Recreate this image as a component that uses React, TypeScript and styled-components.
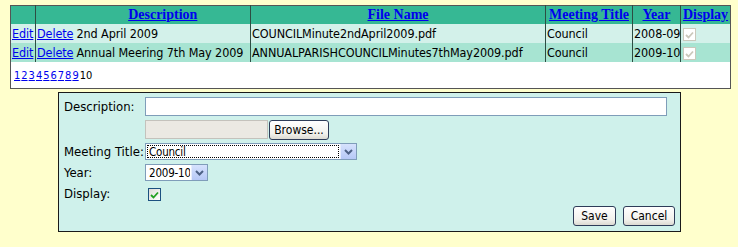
import styled, { createGlobalStyle } from "styled-components";

const GlobalStyle = createGlobalStyle`
  html, body {
    margin: 0;
    padding: 0;
    background: #ffffcc;
  }
  body {
    font-family: "DejaVu Sans Condensed", "DejaVu Sans", "Liberation Sans", Arial, sans-serif;
    font-stretch: condensed;
    font-size: 12.5px;
    color: #000;
  }
`;

const Page = styled.div`
  padding: 5px 7px 0 10px;
`;

const Grid = styled.table`
  width: 721px;
  border-collapse: collapse;
  table-layout: fixed;
  border: 1px solid #555;
`;

const Col = styled.col<{ $w: number }>`
  width: ${p => p.$w}px;
`;

const HeadRow = styled.tr`
  background: #36b894;
`;

const HeadCell = styled.th<{ $line?: boolean }>`
  height: 18px;
  padding: 0 1px;
  font: bold 14px "Liberation Serif", "Times New Roman", serif;
  font-stretch: normal;
  text-align: center;
  white-space: nowrap;
  overflow: hidden;
  border-left: ${p => (p.$line ? "1px solid #2d4d43" : "none")};
  a {
    color: #0000ee;
  }
`;

const Row = styled.tr<{ $alt?: boolean }>`
  background: ${p => (p.$alt ? "#a7e4d2" : "#d3f1ea")};
`;

const Cell = styled.td<{ $line?: boolean }>`
  height: 19px;
  padding: 0 1px;
  white-space: nowrap;
  overflow: hidden;
  letter-spacing: -0.1px;
  border-left: ${p => (p.$line ? "1px solid #2d4d43" : "none")};
  a {
    color: #0000ee;
  }
`;

const PagerCell = styled.td`
  height: 25px;
  padding: 1px 3px 0;
  background: #fff;
`;

const Pager = styled.div`
  display: flex;
  gap: 1px;
  font-size: 11px;
  a {
    color: #0000ee;
  }
`;

const Tick = styled.span<{ $disabled?: boolean }>`
  display: inline-flex;
  align-items: center;
  justify-content: center;
  box-sizing: border-box;
  width: 13px;
  height: 13px;
  margin-left: ${p => (p.$disabled ? "1px" : "3px")};
  vertical-align: middle;
  border: 1px solid ${p => (p.$disabled ? "#cac8bb" : "#1c5180")};
  background: ${p => (p.$disabled ? "#fff" : "linear-gradient(135deg, #dcdcd7, #fff)")};
`;

const Panel = styled.div`
  width: 611px;
  margin: 3px 0 0 48px;
  padding: 4px 5px 5px;
  border: 1px solid #1a1a1a;
  background: #cff1eb;
  display: grid;
  grid-template-columns: 81px 1fr;
  grid-template-rows: 19px 19px 17px 17px 17px 20px;
  row-gap: 4px;
  align-items: center;
`;

const Label = styled.div`
  white-space: nowrap;
  font-size: 13px;
`;

const TextBox = styled.div`
  box-sizing: border-box;
  width: 522px;
  height: 19px;
  border: 1px solid #7f9db9;
  background: #fff;
`;

const FileRow = styled.div`
  display: flex;
  align-items: center;
  gap: 1px;
`;

const FileBox = styled.div`
  box-sizing: border-box;
  width: 123px;
  height: 19px;
  border: 1px solid #c4c2bc;
  background: #ebe9e3;
`;

const Button = styled.button<{ $w: number }>`
  box-sizing: border-box;
  width: ${p => p.$w}px;
  height: 20px;
  padding: 0;
  border: 1px solid #2e3c58;
  border-radius: 3px;
  background: linear-gradient(#ffffff, #f2f1ec 70%, #dcdad2);
  font-family: inherit;
  font-stretch: condensed;
  font-size: 12px;
  color: #000;
`;

const Select = styled.div<{ $w: number }>`
  box-sizing: border-box;
  width: ${p => p.$w}px;
  height: 17px;
  display: flex;
  align-items: stretch;
  border: 1px solid #7f9db9;
  background: #fff;
  font-size: 11.5px;
  white-space: nowrap;
`;

const SelectText = styled.span<{ $focus?: boolean }>`
  flex: 1;
  display: flex;
  align-items: center;
  margin: 1px;
  padding-left: 2px;
  line-height: 12px;
  overflow: hidden;
  letter-spacing: -0.2px;
  outline: ${p => (p.$focus ? "1px dotted #000" : "none")};
  outline-offset: -1px;
`;

const Arrow = styled.span`
  width: 15px;
  flex-shrink: 0;
  display: flex;
  align-items: center;
  justify-content: center;
  background: linear-gradient(#d6e2fd, #b6c8f6);
  border-left: 1px solid #e6edfd;
`;

const Actions = styled.div`
  grid-column: 1 / span 2;
  display: flex;
  justify-content: flex-end;
  gap: 7px;
`;

interface Minute {
  description: string;
  file: string;
  title: string;
  year: string;
}

const minutes: Minute[] = [
  { description: "2nd April 2009", file: "COUNCILMinute2ndApril2009.pdf", title: "Council", year: "2008-09" },
  { description: "Annual Meering 7th May 2009", file: "ANNUALPARISHCOUNCILMinutes7thMay2009.pdf", title: "Council", year: "2009-10" },
];

const Check = ({ color }: { color: string }) => (
  <svg width="9" height="8" viewBox="0 0 9 8">
    <path d="M1 4 L3.5 6.5 L8 1.5" fill="none" stroke={color} strokeWidth="1.8" />
  </svg>
);

const Chevron = () => (
  <svg width="9" height="6" viewBox="0 0 9 6">
    <path d="M1 1 L4.5 4.5 L8 1" fill="none" stroke="#4d6185" strokeWidth="2" />
  </svg>
);

function App() {
  return (
    <Page>
      <GlobalStyle />
      <Grid>
        <colgroup>
          <Col $w={25} />
          <Col $w={40} />
          <Col $w={175} />
          <Col $w={295} />
          <Col $w={87} />
          <Col $w={48} />
          <Col $w={50} />
        </colgroup>
        <thead>
          <HeadRow>
            <HeadCell>&nbsp;</HeadCell>
            <HeadCell $line>&nbsp;</HeadCell>
            <HeadCell><a href="#">Description</a></HeadCell>
            <HeadCell $line><a href="#">File Name</a></HeadCell>
            <HeadCell $line><a href="#">Meeting Title</a></HeadCell>
            <HeadCell $line><a href="#">Year</a></HeadCell>
            <HeadCell $line><a href="#">Display</a></HeadCell>
          </HeadRow>
        </thead>
        <tbody>
          {minutes.map((m, i) => (
            <Row key={m.file} $alt={i % 2 === 1}>
              <Cell><a href="#">Edit</a></Cell>
              <Cell $line><a href="#">Delete</a></Cell>
              <Cell>{m.description}</Cell>
              <Cell $line>{m.file}</Cell>
              <Cell $line>{m.title}</Cell>
              <Cell $line>{m.year}</Cell>
              <Cell $line>
                <Tick $disabled><Check color="#cac8bb" /></Tick>
              </Cell>
            </Row>
          ))}
          <tr>
            <PagerCell colSpan={7}>
              <Pager>
                {[1, 2, 3, 4, 5, 6, 7, 8, 9].map(n => (
                  <a key={n} href="#">{n}</a>
                ))}
                <span>10</span>
              </Pager>
            </PagerCell>
          </tr>
        </tbody>
      </Grid>

      <Panel>
        <Label>Description:</Label>
        <TextBox />

        <div />
        <FileRow>
          <FileBox />
          <Button $w={60}>Browse...</Button>
        </FileRow>

        <Label>Meeting Title:</Label>
        <Select $w={212}>
          <SelectText $focus>Council</SelectText>
          <Arrow><Chevron /></Arrow>
        </Select>

        <Label>Year:</Label>
        <Select $w={63}>
          <SelectText>2009-10</SelectText>
          <Arrow><Chevron /></Arrow>
        </Select>

        <Label>Display:</Label>
        <div>
          <Tick><Check color="#21a121" /></Tick>
        </div>

        <Actions>
          <Button $w={43}>Save</Button>
          <Button $w={52}>Cancel</Button>
        </Actions>
      </Panel>
    </Page>
  );
}

export default App;
